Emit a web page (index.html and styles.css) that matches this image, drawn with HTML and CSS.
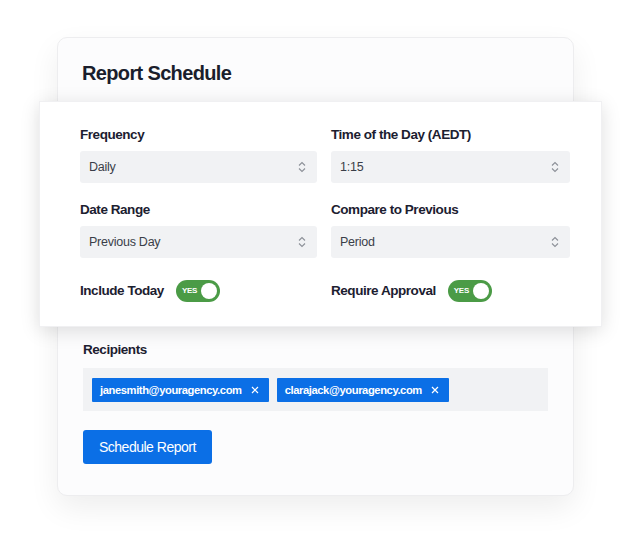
FILE: index.html
```html
<!DOCTYPE html>
<html lang="en">
<head>
<meta charset="utf-8">
<title>Report Schedule</title>
<link rel="stylesheet" href="styles.css">
</head>
<body>
<div class="stage">
  <div class="card">
    <h1 class="title">Report Schedule</h1>
    <div class="panel">
      <div class="grid">
        <div class="field">
          <div class="label">Frequency</div>
          <div class="select"><span>Daily</span>
            <svg class="chev" width="8" height="12" viewBox="0 0 8 12"><path d="M1 4.5 L4 1.5 L7 4.5 M1 7.5 L4 10.5 L7 7.5" fill="none" stroke="#8c9098" stroke-width="1.1"/></svg>
          </div>
        </div>
        <div class="field">
          <div class="label">Time of the Day (AEDT)</div>
          <div class="select"><span>1:15</span>
            <svg class="chev" width="8" height="12" viewBox="0 0 8 12"><path d="M1 4.5 L4 1.5 L7 4.5 M1 7.5 L4 10.5 L7 7.5" fill="none" stroke="#8c9098" stroke-width="1.1"/></svg>
          </div>
        </div>
        <div class="field">
          <div class="label">Date Range</div>
          <div class="select"><span>Previous Day</span>
            <svg class="chev" width="8" height="12" viewBox="0 0 8 12"><path d="M1 4.5 L4 1.5 L7 4.5 M1 7.5 L4 10.5 L7 7.5" fill="none" stroke="#8c9098" stroke-width="1.1"/></svg>
          </div>
        </div>
        <div class="field">
          <div class="label">Compare to Previous</div>
          <div class="select"><span>Period</span>
            <svg class="chev" width="8" height="12" viewBox="0 0 8 12"><path d="M1 4.5 L4 1.5 L7 4.5 M1 7.5 L4 10.5 L7 7.5" fill="none" stroke="#8c9098" stroke-width="1.1"/></svg>
          </div>
        </div>
        <div class="toggle-row">
          <span class="label">Include Today</span>
          <span class="toggle"><span class="yes">YES</span><span class="knob"></span></span>
        </div>
        <div class="toggle-row">
          <span class="label">Require Approval</span>
          <span class="toggle"><span class="yes">YES</span><span class="knob"></span></span>
        </div>
      </div>
    </div>
    <div class="label rec-label">Recipients</div>
    <div class="rec-box">
      <span class="chip">janesmith@youragency.com
        <svg class="x" width="8" height="8" viewBox="0 0 8 8"><path d="M1 1 L7 7 M7 1 L1 7" stroke="#fff" stroke-width="1.2"/></svg>
      </span>
      <span class="chip">clarajack@youragency.com
        <svg class="x" width="8" height="8" viewBox="0 0 8 8"><path d="M1 1 L7 7 M7 1 L1 7" stroke="#fff" stroke-width="1.2"/></svg>
      </span>
    </div>
    <button class="btn">Schedule Report</button>
  </div>
</div>
</body>
</html>
```
FILE: styles.css
```css
* { box-sizing: border-box; }
html, body { margin: 0; padding: 0; background: #ffffff; }
body {
  font-family: "Liberation Sans", Arial, sans-serif;
  color: #1c2030;
  width: 640px;
  height: 533px;
  overflow: hidden;
}
.stage {
  padding: 37px 0 0 57px;
}
.card {
  width: 517px;
  background: #fcfcfd;
  border: 1px solid #ededef;
  border-radius: 10px;
  box-shadow: 0 12px 30px rgba(0, 0, 0, 0.07);
  padding: 22px 25px 31px 25px;
}
.title {
  margin: 0 0 15px -1px;
  font-size: 20px;
  line-height: 26px;
  font-weight: 700;
  letter-spacing: -0.65px;
  color: #1a1e2c;
}
.panel {
  width: 563px;
  margin-left: -44px;
  background: #ffffff;
  border: 1px solid #f0f0f2;
  box-shadow: 0 4px 18px rgba(0, 0, 0, 0.13);
  padding: 24px 31px 24px 40px;
  position: relative;
}
.grid {
  display: grid;
  grid-template-columns: 237px 1fr;
  column-gap: 14px;
  row-gap: 18px;
}
.label {
  font-size: 13.5px;
  line-height: 18px;
  font-weight: 700;
  letter-spacing: -0.45px;
  color: #1c2030;
}
.field .label { margin-bottom: 7px; }
.select {
  height: 32px;
  background: #f1f2f4;
  border-radius: 3px;
  display: flex;
  align-items: center;
  justify-content: space-between;
  padding: 0 11px 0 9px;
  font-size: 12.5px;
  letter-spacing: -0.25px;
  color: #3a3e48;
}
.chev { display: block; }
.toggle-row {
  margin-top: 4px;
  display: flex;
  align-items: center;
  gap: 12px;
  height: 22px;
}
.toggle {
  width: 44px;
  height: 22px;
  border-radius: 11px;
  background: #4b9b46;
  display: flex;
  align-items: center;
  justify-content: space-between;
  padding: 0 3px 0 6px;
}
.yes {
  font-size: 8px;
  font-weight: 700;
  letter-spacing: -0.3px;
  color: #ffffff;
  line-height: 1;
}
.knob {
  width: 16px;
  height: 16px;
  border-radius: 50%;
  background: #ffffff;
}
.rec-label {
  margin-top: 14px;
  margin-bottom: 9px;
}
.rec-box {
  background: #f1f2f4;
  height: 43px;
  display: flex;
  align-items: center;
  gap: 8px;
  padding: 0 9px;
}
.chip {
  height: 24px;
  background: #0b6fe6;
  color: #ffffff;
  font-size: 11.2px;
  font-weight: 700;
  letter-spacing: -0.4px;
  display: inline-flex;
  align-items: center;
  gap: 9px;
  padding: 0 10px 0 8px;
  border-radius: 1px;
}
.x { display: block; }
.btn {
  margin-top: 19px;
  height: 34px;
  padding: 0 16px;
  border: none;
  border-radius: 3px;
  background: #0b6fe6;
  color: #ffffff;
  font-family: inherit;
  font-size: 14px;
  letter-spacing: -0.5px;
  display: block;
}
```
